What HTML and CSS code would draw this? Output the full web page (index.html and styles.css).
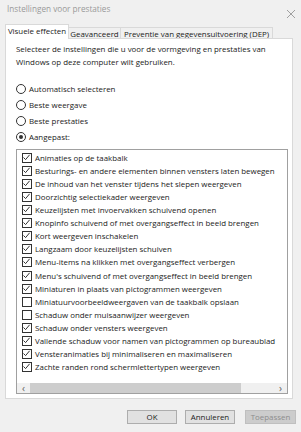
FILE: index.html
```html
<!DOCTYPE html>
<html lang="nl">
<head>
  <meta charset="UTF-8">
  <title>Instellingen voor prestaties</title>
  <link rel="stylesheet" href="styles.css">
</head>
<body>
  <div class="dialog">
    <div class="titlebar">
      <span class="title">Instellingen voor prestaties</span>
      <svg class="close" width="10" height="10" viewBox="0 0 10 10"><path d="M1 1L9 9M9 1L1 9" stroke="#a0a0a0" stroke-width="1" fill="none"/></svg>
    </div>

    <!-- tabbladen -->
    <div class="tabs">
      <div class="tab active">Visuele effecten</div>
      <div class="tab tab-adv">Geavanceerd</div>
      <div class="tab tab-dep">Preventie van gegevensuitvoering (DEP)</div>
    </div>

    <div class="panel">
      <p class="intro">Selecteer de instellingen die u voor de vormgeving en prestaties van Windows op deze computer wilt gebruiken.</p>

      <div class="radios">
        <label class="radio"><span class="dot"></span>Automatisch selecteren</label>
        <label class="radio"><span class="dot"></span>Beste weergave</label>
        <label class="radio"><span class="dot"></span>Beste prestaties</label>
        <label class="radio on"><span class="dot"></span>Aangepast:</label>
      </div>

      <div class="listbox">
        <ul class="items" id="items"></ul>
        <div class="hscroll">
          <span class="arrow">&lsaquo;</span>
          <span class="track"><span class="thumb"></span></span>
          <span class="arrow">&rsaquo;</span>
        </div>
      </div>
    </div>

    <div class="buttons">
      <button class="btn">OK</button>
      <button class="btn">Annuleren</button>
      <button class="btn apply" disabled>Toepassen</button>
    </div>
  </div>

  <script>
    // lijst met visuele effecten (true = aangevinkt)
    const effects = [
      ['Animaties op de taakbalk', true],
      ['Besturings- en andere elementen binnen vensters laten bewegen', true],
      ['De inhoud van het venster tijdens het slepen weergeven', true],
      ['Doorzichtig selectiekader weergeven', true],
      ['Keuzelijsten met invoervakken schuivend openen', true],
      ['Knopinfo schuivend of met overgangseffect in beeld brengen', true],
      ['Kort weergeven inschakelen', true],
      ['Langzaam door keuzelijsten schuiven', true],
      ['Menu-items na klikken met overgangseffect verbergen', true],
      ["Menu's schuivend of met overgangseffect in beeld brengen", true],
      ['Miniaturen in plaats van pictogrammen weergeven', true],
      ['Miniatuurvoorbeeldweergaven van de taakbalk opslaan', false],
      ['Schaduw onder muisaanwijzer weergeven', false],
      ['Schaduw onder vensters weergeven', true],
      ['Vallende schaduw voor namen van pictogrammen op bureaublad', true],
      ['Vensteranimaties bij minimaliseren en maximaliseren', true],
      ['Zachte randen rond schermlettertypen weergeven', true]
    ];

    const check = '<svg width="9" height="9" viewBox="0 0 9 9"><path d="M1.5 4.5L3.6 6.6L7.6 1.8" stroke="#333" stroke-width="1" fill="none"/></svg>';
    const list = document.getElementById('items');
    effects.forEach(function (e) {
      const li = document.createElement('li');
      li.innerHTML = '<span class="box">' + (e[1] ? check : '') + '</span>' + e[0];
      list.appendChild(li);
    });
  </script>
</body>
</html>
```

FILE: styles.css
```css
/* venster */
body {
  margin: 0;
  background: #f0f0f0;
  font-family: "Open Sans", "Noto Sans", sans-serif;
  font-size: 7.9px;
  color: #222;
}

.dialog {
  width: 301px;
  height: 432px;
  display: flex;
  flex-direction: column;
}

.dialog > * {
  flex: none;
}

.titlebar {
  height: 25px;
  display: flex;
  justify-content: space-between;
  align-items: flex-start;
  padding: 3px 5px 0 7px;
  box-sizing: border-box;
}

.title {
  color: #9a9a9a;
  font-size: 8.2px;
}

.close {
  margin-top: 6px;
}

/* tabbladen */
.tabs {
  display: flex;
  margin-left: 5px;
  height: 14px;
  align-items: flex-end;
}

.tab {
  height: 12px;
  line-height: 12px;
  text-align: center;
  border: 1px solid #d9d9d9;
  border-bottom: none;
  margin-left: -1px;
  background: #f0f0f0;
  box-sizing: border-box;
}

.tab.active {
  width: 64px;
  height: 15px;
  line-height: 13px;
  background: #fff;
  margin-left: 0;
  position: relative;
  z-index: 1;
}

.tab-adv {
  width: 53px;
}

.tab-dep {
  width: 153px;
}

/* tabpagina */
.panel {
  width: 288px;
  height: 361px;
  margin-left: 5px;
  background: #fff;
  border: 1px solid #d9d9d9;
  box-sizing: border-box;
  padding: 4px 0 0 10px;
  margin-top: -1px;
}

.intro {
  margin: 0;
  line-height: 13px;
  padding-right: 8px;
}

.radios {
  display: flex;
  flex-direction: column;
  margin-top: 12px;
}

.radio {
  display: flex;
  align-items: center;
  height: 16px;
}

.dot {
  width: 8px;
  height: 8px;
  border: 1px solid #333;
  border-radius: 50%;
  margin-right: 3px;
  display: flex;
  align-items: center;
  justify-content: center;
}

.radio.on .dot::after {
  content: "";
  width: 4px;
  height: 4px;
  border-radius: 50%;
  background: #333;
}

/* lijst met selectievakjes */
.listbox {
  width: 272px;
  height: 245px;
  margin-top: 4px;
  border: 1px solid #a0a0a0;
  box-sizing: border-box;
  display: grid;
  grid-template-rows: 1fr 10px;
  overflow: hidden;
}

.items {
  list-style: none;
  margin: 0;
  padding: 1px 0 0 5px;
  white-space: nowrap;
  overflow: hidden;
}

.items li {
  display: flex;
  align-items: center;
  height: 13.12px;
}

.box {
  width: 8px;
  height: 8px;
  border: 1px solid #333;
  margin-right: 3px;
  flex: none;
  display: flex;
}

.box svg {
  margin: -1px 0 0 -1px;
}

.hscroll {
  display: flex;
  align-items: center;
  background: #f0f0f0;
}

.arrow {
  width: 13px;
  text-align: center;
  color: #606060;
  font-size: 10px;
  line-height: 10px;
}

.track {
  flex: 1;
  height: 10px;
}

.thumb {
  display: block;
  width: 211px;
  height: 10px;
  background: #cdcdcd;
}

/* knoppen */
.buttons {
  display: flex;
  justify-content: flex-end;
  gap: 8px;
  padding: 11px 5px 0 0;
}

.btn {
  width: 50px;
  height: 14px;
  padding: 0;
  font: inherit;
  background: #e1e1e1;
  border: 1px solid #adadad;
  color: #222;
}

.btn.apply {
  width: 51px;
  margin-left: 2px;
}

.btn:disabled {
  background: #cccccc;
  border-color: #bfbfbf;
  color: #8c8c8c;
}
```
